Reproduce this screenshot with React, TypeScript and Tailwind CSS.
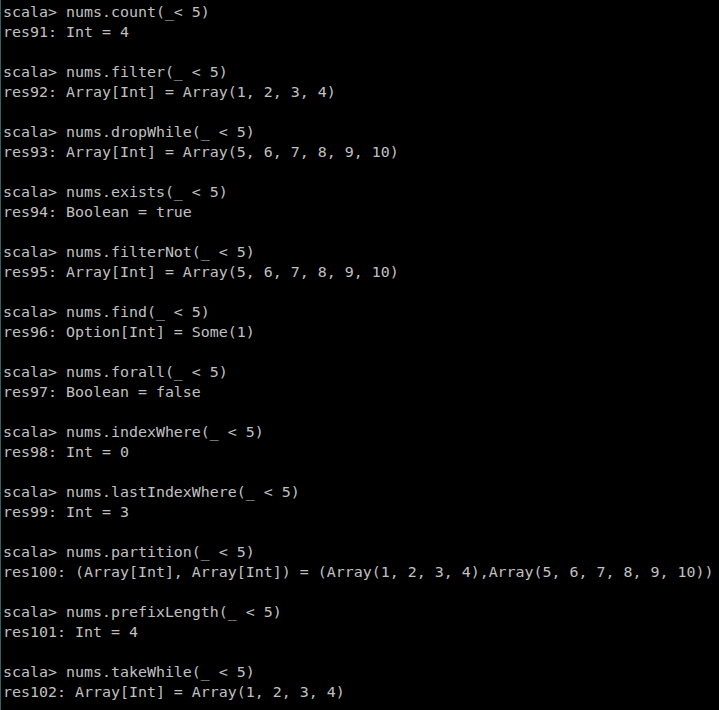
// Scala REPL session — filter/predicate methods on an Array

const session: [string, string][] = [
  ['nums.count(_< 5)', 'res91: Int = 4'],
  ['nums.filter(_ < 5)', 'res92: Array[Int] = Array(1, 2, 3, 4)'],
  ['nums.dropWhile(_ < 5)', 'res93: Array[Int] = Array(5, 6, 7, 8, 9, 10)'],
  ['nums.exists(_ < 5)', 'res94: Boolean = true'],
  ['nums.filterNot(_ < 5)', 'res95: Array[Int] = Array(5, 6, 7, 8, 9, 10)'],
  ['nums.find(_ < 5)', 'res96: Option[Int] = Some(1)'],
  ['nums.forall(_ < 5)', 'res97: Boolean = false'],
  ['nums.indexWhere(_ < 5)', 'res98: Int = 0'],
  ['nums.lastIndexWhere(_ < 5)', 'res99: Int = 3'],
  ['nums.partition(_ < 5)', 'res100: (Array[Int], Array[Int]) = (Array(1, 2, 3, 4),Array(5, 6, 7, 8, 9, 10))'],
  ['nums.prefixLength(_ < 5)', 'res101: Int = 4'],
  ['nums.takeWhile(_ < 5)', 'res102: Array[Int] = Array(1, 2, 3, 4)'],
]

export default function App() {
  return (
    <div className="w-[719px] h-[710px] bg-black border-l border-[#2f6464] overflow-hidden">
      <div className="pl-[2px] pt-[2px] text-[#c0c0c0] text-[14.95px] leading-[20px] whitespace-pre font-['DejaVu_Sans_Mono',monospace]">
        {session.map(([cmd, out], i) => (
          <div key={i} className={i > 0 ? 'mt-[20px]' : ''}>
            <div>{'scala> ' + cmd}</div>
            <div>{out}</div>
          </div>
        ))}
      </div>
    </div>
  )
}
